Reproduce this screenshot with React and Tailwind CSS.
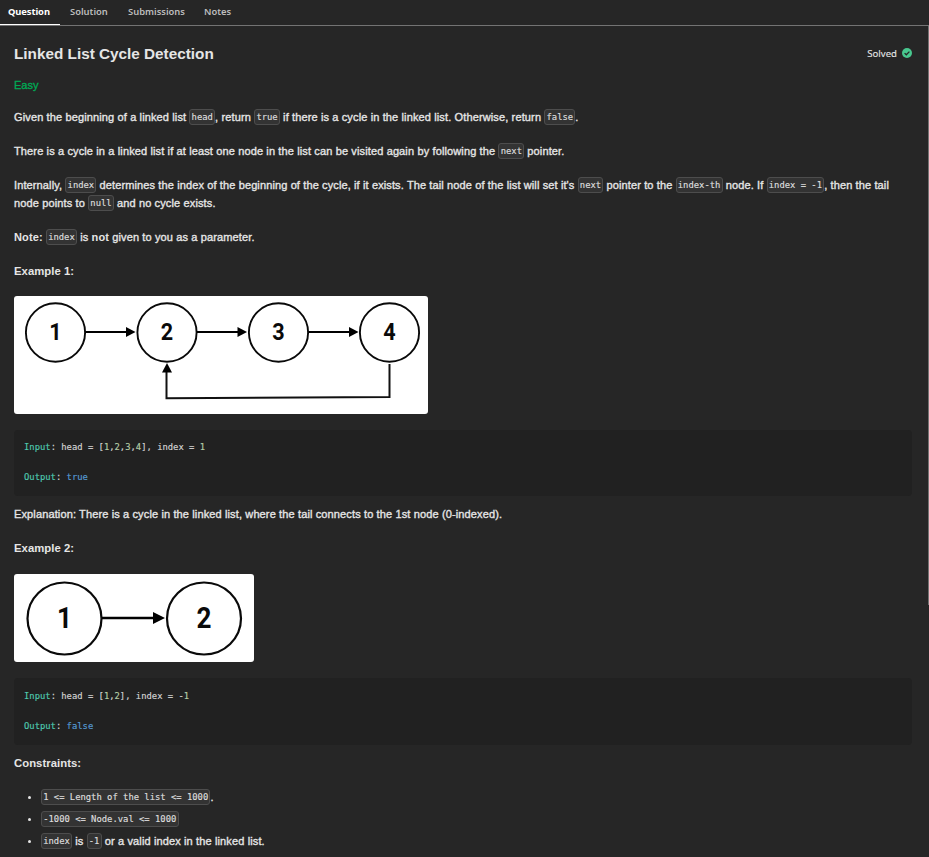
import React from "react";

const Code = ({ children }) => (
  <code className="relative top-[-1px] inline-block h-[16px] whitespace-pre rounded-[3px] border border-[#4d4d4d] bg-[#333333] px-[1.2px] align-middle font-['DejaVu_Sans_Mono',monospace] text-[8.85px] leading-[14px] font-normal tracking-normal text-[#dedede] [-webkit-text-stroke:0.15px]">
    {children}
  </code>
);

const P = ({ className = "", children }) => (
  <p className={"h-[18px] whitespace-pre " + className}>{children}</p>
);

const Node = ({ x, y, rx, ry, w, n, size }) => (
  <g>
    <ellipse cx={x} cy={y} rx={rx} ry={ry} fill="white" stroke="#0a0a0a" strokeWidth={w} />
    <text
      transform={`translate(${x} ${y + size * 0.32}) scale(0.9 1)`}
      textAnchor="middle"
      fontSize={size}
      className="font-['Roboto',sans-serif] font-bold tracking-normal"
      fill="#0a0a0a"
    >
      {n}
    </text>
  </g>
);

const CycleDiagram = () => (
  <svg width="414" height="118" viewBox="0 0 414 118" className="mt-4 block rounded-[3px] bg-white [-webkit-text-stroke:0px]">
    {[41.5, 153, 264.5, 375.5].map((x, i) => (
      <Node key={x} x={x} y={36.5} rx={29.6} ry={29.2} w={1.9} n={i + 1} size={24} />
    ))}
    {[71.5, 183, 294.5].map((x) => (
      <g key={x}>
        <path d={`M${x} 36H${x + 42}`} stroke="#000" strokeWidth="2" />
        <path d={`M${x + 40.5} 31L${x + 50} 36L${x + 40.5} 41Z`} fill="#000" />
      </g>
    ))}
    <path d="M375.5 68V101L152.5 102.2V76" fill="none" stroke="#111" strokeWidth="2" />
    <path d="M148 76.5L153 67L158 76.5Z" fill="#000" />
  </svg>
);

const LineDiagram = () => (
  <svg width="240" height="88" viewBox="0 0 240 88" className="mt-[17px] block rounded-[3px] bg-white [-webkit-text-stroke:0px]">
    <Node x={50.5} y={44.5} rx={37} ry={36} w={2.2} n={1} size={29} />
    <Node x={190} y={44.5} rx={37} ry={36} w={2.2} n={2} size={29} />
    <path d="M88 44H141" stroke="#000" strokeWidth="2.4" />
    <path d="M139 38L151 44L139 50Z" fill="#000" />
  </svg>
);

const Num = ({ children }) => <span className="text-[#b5cea8]">{children}</span>;
const Key = ({ children }) => <span className="text-[#4ec9b0]">{children}</span>;
const Bool = ({ children }) => <span className="text-[#569cd6]">{children}</span>;

const Block = ({ className = "", children }) => (
  <pre
    className={
      "w-[898px] rounded-[4px] bg-[#212121] px-[10px] font-['DejaVu_Sans_Mono',monospace] text-[8.85px] leading-[15px] font-normal tracking-normal text-[#d4d4d4] [-webkit-text-stroke:0.15px] " +
      className
    }
  >
    {children}
  </pre>
);

const Item = ({ children }) => (
  <li className="flex h-[18px] items-center whitespace-pre">
    <span className="mr-[10px] ml-[14px] h-[3px] w-[3px] rounded-full bg-[#e5e5e5]" />
    <div>{children}</div>
  </li>
);

export default function App() {
  return (
    <div className="flex h-[857px] w-[929px] flex-col overflow-hidden bg-[#262626] text-[#e5e5e5]">
      <nav className="flex h-[26px] shrink-0 border-b border-[#737373] font-['Noto_Sans',sans-serif] text-[9.4px] leading-[24px] font-semibold text-[#bdbdbd]">
        <div className="h-[25px] w-[60px] border-b border-white pl-[8px] font-bold tracking-[-0.01em] text-white">Question</div>
        <div className="w-[58px] pl-[10px]">Solution</div>
        <div className="w-[76px] pl-[10px]">Submissions</div>
        <div className="pl-[10px]">Notes</div>
      </nav>
      <div className="flex min-h-0 flex-1">
        <main className="w-[928px] pl-[14px] font-['Liberation_Sans',Arial,sans-serif] text-[11px] leading-[18px] tracking-[0.13px] [-webkit-text-stroke:0.35px]">
          <div className="mt-[16px] flex h-[24px] items-center justify-between pr-[16px]">
            <h1 className="text-[15.3px] tracking-normal font-bold [-webkit-text-stroke:0px]">Linked List Cycle Detection</h1>
            <div className="flex h-[22px] items-center gap-[5px] self-start font-['Noto_Sans',sans-serif] text-[9.6px] tracking-normal [-webkit-text-stroke:0.1px]">
              <span className="mt-px">Solved</span>
              <svg width="10" height="10" viewBox="0 0 10 10">
                <circle cx="5" cy="5" r="5" fill="#48c78e" />
                <path d="M2.6 5.1L4.3 6.8L7.4 3.6" fill="none" stroke="#262626" strokeWidth="1.3" />
              </svg>
            </div>
          </div>
          <P className="mt-[10px] tracking-normal text-[#00a854]">Easy</P>
          <P className="mt-[14px]">
            Given the beginning of a linked list <Code>head</Code>, return <Code>true</Code> if there is a cycle in the linked list. Otherwise, return <Code>false</Code>.
          </P>
          <P className="mt-4">
            There is a cycle in a linked list if at least one node in the list can be visited again by following the <Code>next</Code> pointer.
          </P>
          <P className="mt-4 tracking-[0.12px]">
            Internally, <Code>index</Code> determines the index of the beginning of the cycle, if it exists. The tail node of the list will set it's <Code>next</Code> pointer to the <Code>index-th</Code> node. If <Code>index = -1</Code>, then the tail
          </P>
          <P>
            node points to <Code>null</Code> and no cycle exists.
          </P>
          <P className="mt-4">
            <b className="[-webkit-text-stroke:0px]">Note:</b> <Code>index</Code> is <b className="[-webkit-text-stroke:0px]">not</b> given to you as a parameter.
          </P>
          <P className="mt-4 text-[11.3px] font-bold tracking-[0.05px] [-webkit-text-stroke:0px]">Example 1:</P>
          <CycleDiagram />
          <Block className="mt-4 h-[66px] pt-[10px]">
            <Key>Input</Key>: head = [<Num>1</Num>,<Num>2</Num>,<Num>3</Num>,<Num>4</Num>], index = <Num>1</Num>
            {"\n\n"}
            <Key>Output</Key>: <Bool>true</Bool>
          </Block>
          <P className="mt-[9px]">Explanation: There is a cycle in the linked list, where the tail connects to the 1st node (0-indexed).</P>
          <P className="mt-4 text-[11.3px] font-bold tracking-[0.05px] [-webkit-text-stroke:0px]">Example 2:</P>
          <LineDiagram />
          <Block className="mt-4 h-[67px] pt-[11px]">
            <Key>Input</Key>: head = [<Num>1</Num>,<Num>2</Num>], index = -<Num>1</Num>
            {"\n\n"}
            <Key>Output</Key>: <Bool>false</Bool>
          </Block>
          <P className="mt-[9px] text-[11.3px] font-bold tracking-[0.05px] [-webkit-text-stroke:0px]">Constraints:</P>
          <ul className="mt-4 flex flex-col gap-1">
            <Item><Code>1 &lt;= Length of the list &lt;= 1000</Code>.</Item>
            <Item><Code>-1000 &lt;= Node.val &lt;= 1000</Code></Item>
            <Item><Code>index</Code> is <Code>-1</Code> or a valid index in the linked list.</Item>
          </ul>
        </main>
        <div className="h-[579px] w-px bg-[#737373]" />
      </div>
    </div>
  );
}
